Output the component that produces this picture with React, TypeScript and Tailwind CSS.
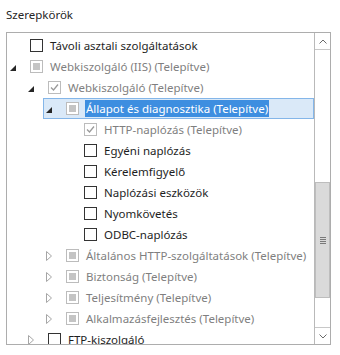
import React from "react";

type Exp = "open" | "closed" | null;
type Chk = "none" | "indet" | "checked";

interface RowProps {
  level: 0 | 1 | 2 | 3;
  exp: Exp;
  chk: Chk;
  disabled?: boolean;
  selected?: boolean;
  text: string;
}

const indentClass: Record<number, string> = {
  0: "w-0",
  1: "w-[18px]",
  2: "w-[36px]",
  3: "w-[54px]",
};

function Expander({ exp }: { exp: Exp }) {
  return (
    <div className="w-[23px] h-full flex items-center pl-[3px] shrink-0">
      {exp === "open" && (
        <svg width="6" height="6" viewBox="0 0 6 6" className="mt-[2px]">
          <polygon points="6,0 6,6 0,6" fill="#262626" />
        </svg>
      )}
      {exp === "closed" && (
        <svg width="6" height="10" viewBox="0 0 6 10">
          <polygon points="0.5,0.5 5.5,5 0.5,9.5" fill="none" stroke="#a6a6a6" strokeWidth="1" />
        </svg>
      )}
    </div>
  );
}

function Check({ chk, disabled }: { chk: Chk; disabled?: boolean }) {
  const border = disabled ? "border-[#bcbcbc]" : "border-[#333333]";
  return (
    <div className={`w-[13px] h-[13px] border ${border} bg-white flex items-center justify-center shrink-0`}>
      {chk === "indet" && <div className="w-[7px] h-[7px] bg-[#c4c4c4]" />}
      {chk === "checked" && (
        <svg width="11" height="11" viewBox="0 0 11 11">
          <polyline points="2,5.5 4.5,8 9,2.5" fill="none" stroke="#9a9a9a" strokeWidth="1.3" />
        </svg>
      )}
    </div>
  );
}

function Row({ level, exp, chk, disabled, selected, text }: RowProps) {
  return (
    <div className="flex h-[21px] w-full">
      <div className={`${indentClass[level]} shrink-0`} />
      <div
        className={`flex items-center flex-1 h-full ${
          selected ? "bg-[#dae9f8] border border-[#84b6e9]" : "border border-transparent"
        }`}
      >
        <div className="-ml-px flex items-center h-full">
          <Expander exp={exp} />
        </div>
        <Check chk={chk} disabled={disabled} />
        <span
          className={`ml-[6px] whitespace-nowrap leading-[17px] px-px ${
            selected ? "bg-[#3d8ee0] text-white" : disabled ? "text-[#7f7f7f]" : "text-[#1e1e1e]"
          }`}
        >
          {text}
        </span>
      </div>
    </div>
  );
}

function ScrollBar() {
  return (
    <div className="w-[16px] shrink-0 border-l border-[#b9b9b9] flex flex-col bg-white">
      <div className="h-[17px] border-b border-[#c8c8c8] flex items-center justify-center shrink-0">
        <svg width="8" height="5" viewBox="0 0 8 5">
          <polyline points="0.5,4.5 4,1 7.5,4.5" fill="none" stroke="#6a6a6a" strokeWidth="1" />
        </svg>
      </div>
      <div className="flex-1 flex flex-col">
        <div className="h-[132px]" />
        <div className="h-[116px] bg-[#dadada] border border-[#bdbdbd] flex flex-col items-center justify-center gap-[1px]">
          <div className="w-[6px] h-px bg-[#7a7a7a]" />
          <div className="w-[6px] h-px bg-[#7a7a7a]" />
          <div className="w-[6px] h-px bg-[#7a7a7a]" />
          <div className="w-[6px] h-px bg-[#7a7a7a]" />
        </div>
        <div className="flex-1" />
      </div>
      <div className="h-[17px] border-t border-[#c8c8c8] flex items-center justify-center shrink-0">
        <svg width="8" height="5" viewBox="0 0 8 5">
          <polyline points="0.5,0.5 4,4 7.5,0.5" fill="none" stroke="#6a6a6a" strokeWidth="1" />
        </svg>
      </div>
    </div>
  );
}

export default function App() {
  const rows: RowProps[] = [
    { level: 0, exp: null, chk: "none", text: "Távoli asztali szolgáltatások" },
    { level: 0, exp: "open", chk: "indet", disabled: true, text: "Webkiszolgáló (IIS) (Telepítve)" },
    { level: 1, exp: "open", chk: "checked", disabled: true, text: "Webkiszolgáló (Telepítve)" },
    { level: 2, exp: "open", chk: "indet", disabled: true, selected: true, text: "Állapot és diagnosztika (Telepítve)" },
    { level: 3, exp: null, chk: "checked", disabled: true, text: "HTTP-naplózás (Telepítve)" },
    { level: 3, exp: null, chk: "none", text: "Egyéni naplózás" },
    { level: 3, exp: null, chk: "none", text: "Kérelemfigyelő" },
    { level: 3, exp: null, chk: "none", text: "Naplózási eszközök" },
    { level: 3, exp: null, chk: "none", text: "Nyomkövetés" },
    { level: 3, exp: null, chk: "none", text: "ODBC-naplózás" },
    { level: 2, exp: "closed", chk: "indet", disabled: true, text: "Általános HTTP-szolgáltatások (Telepítve)" },
    { level: 2, exp: "closed", chk: "indet", disabled: true, text: "Biztonság (Telepítve)" },
    { level: 2, exp: "closed", chk: "indet", disabled: true, text: "Teljesítmény (Telepítve)" },
    { level: 2, exp: "closed", chk: "indet", disabled: true, text: "Alkalmazásfejlesztés (Telepítve)" },
    { level: 1, exp: "closed", chk: "none", text: "FTP-kiszolgáló" },
  ];
  return (
    <div
      className="w-[340px] h-[355px] bg-white pt-[7px] pl-[6px] text-[11.5px]"
      style={{ fontFamily: "'Noto Sans', sans-serif" }}
    >
      <div className="text-[#262626] leading-[16px] h-[25px]">Szerepkörök</div>
      <div className="w-[325px] h-[313px] border border-[#adadad] flex overflow-hidden">
        <div className="flex-1 pt-[2px] overflow-hidden">
          {rows.map((r, i) => (
            <Row key={i} {...r} />
          ))}
        </div>
        <ScrollBar />
      </div>
    </div>
  );
}
